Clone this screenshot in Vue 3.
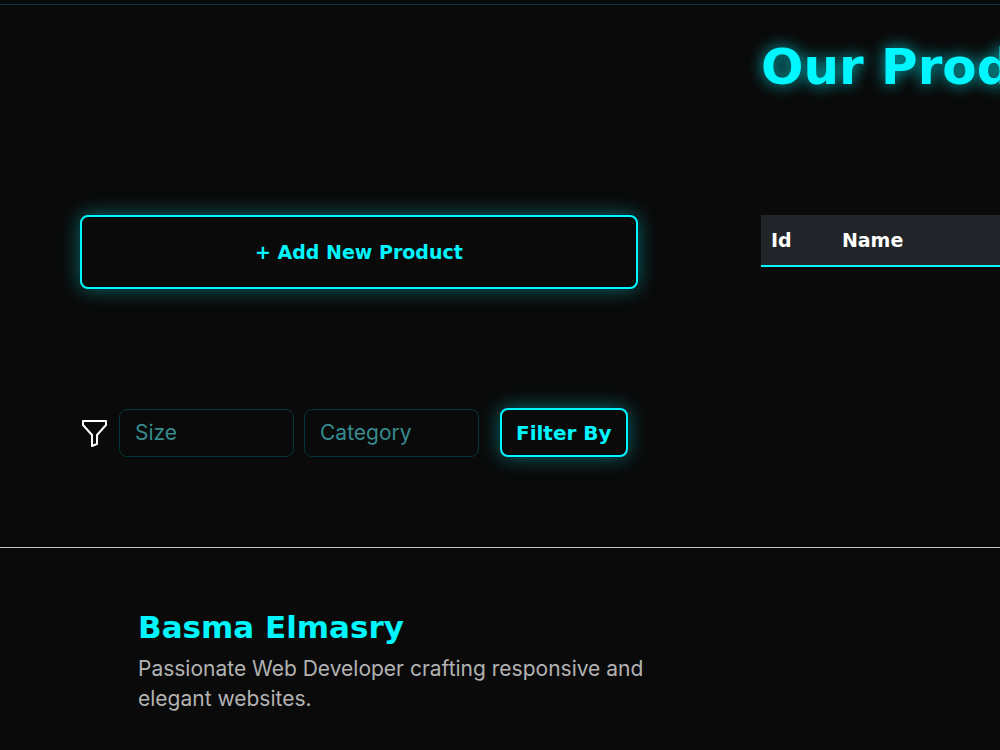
<script setup>
import { ref } from 'vue'

const size = ref('')
const category = ref('')
const columns = ['Id', 'Name']
</script>

<template>
  <div class="page">
    <main class="products">
      <h1 class="title">Our Products</h1>
      <div class="tools">
        <button type="button" class="neon add">+ Add New Product</button>
        <form class="filters" @submit.prevent>
          <svg class="funnel" viewBox="0 0 28 28" aria-hidden="true">
            <path d="M3 2H26V6L17 16V25L12 27V16L3 6Z" />
          </svg>
          <input v-model="size" class="field" type="text" placeholder="Size" aria-label="Size" />
          <input v-model="category" class="field" type="text" placeholder="Category" aria-label="Category" />
          <button type="submit" class="neon filter">Filter By</button>
        </form>
      </div>
      <div class="listing">
        <table class="table">
          <thead>
            <tr>
              <th v-for="name in columns" :key="name" scope="col">{{ name }}</th>
            </tr>
          </thead>
        </table>
      </div>
    </main>
    <footer class="footer">
      <h2 class="author">Basma Elmasry</h2>
      <p class="about">Passionate Web Developer crafting responsive and elegant websites.</p>
    </footer>
  </div>
</template>

<style>
body {
  background: #0a0a0a;
}
</style>

<style scoped>
.page {
  box-sizing: border-box;
  min-height: 100vh;
  padding-top: 4px;
  overflow: hidden;
  background: #0a0a0a;
  font-family: Inter, "Open Sans", sans-serif;
  font-size: 21px;
}

.products {
  display: grid;
  grid-template-columns: minmax(0, 7fr) minmax(0, 3fr);
  column-gap: 123px;
  padding: 32px 0 90px 8%;
  border-top: 1px solid #053638;
}

.title,
.author,
.neon,
.table {
  font-family: "DejaVu Sans", sans-serif;
  font-weight: 700;
}

.title {
  grid-column: 2;
  margin: 0 0 118px;
  color: #00f7ff;
  font-size: 50px;
  line-height: 60px;
  white-space: nowrap;
  text-shadow: 0 0 15px rgba(0, 247, 255, 0.75);
}

.tools {
  grid-column: 1;
}

.neon {
  box-sizing: border-box;
  border: 2px solid #00f7ff;
  border-radius: 8px;
  background: #0a0a0a;
  color: #00f7ff;
  font-size: 20px;
  box-shadow: 0 0 20px rgba(0, 247, 255, 0.4);
}

.add {
  display: block;
  width: 100%;
  height: 74px;
  margin-bottom: 119px;
  font-size: 19px;
}

.filters {
  display: flex;
  align-items: center;
}

.funnel {
  flex: none;
  width: 28px;
  height: 28px;
  margin-right: 11px;
  fill: none;
  stroke: #fff;
  stroke-width: 2;
  stroke-linejoin: round;
}

.field {
  box-sizing: border-box;
  flex: 0 1 175px;
  min-width: 0;
  height: 48px;
  margin-right: 10px;
  padding: 0 15px;
  border: 1px solid #053638;
  border-radius: 8px;
  background: transparent;
  color: #00f7ff;
  font: inherit;
}

.field::placeholder {
  color: #358b8e;
  opacity: 1;
}

.filter {
  flex: none;
  height: 49px;
  margin-left: 11px;
  padding: 0 14px;
}

.table {
  width: 100%;
  border-collapse: collapse;
  background: #212529;
  color: #fff;
  font-size: 19px;
  line-height: 30px;
  text-align: left;
}

.table th {
  padding: 10px;
  border-bottom: 2px solid #00f7ff;
}

.table th:first-child {
  width: 51px;
}

.footer {
  padding: 60px 34% 30px 138px;
  border-top: 1px solid #c4c4c4;
}

.author {
  margin: 0 0 8px;
  color: #00f7ff;
  font-size: 31px;
  line-height: 38px;
}

.about {
  margin: 0;
  color: #b3b3b3;
  line-height: 30px;
}
</style>
